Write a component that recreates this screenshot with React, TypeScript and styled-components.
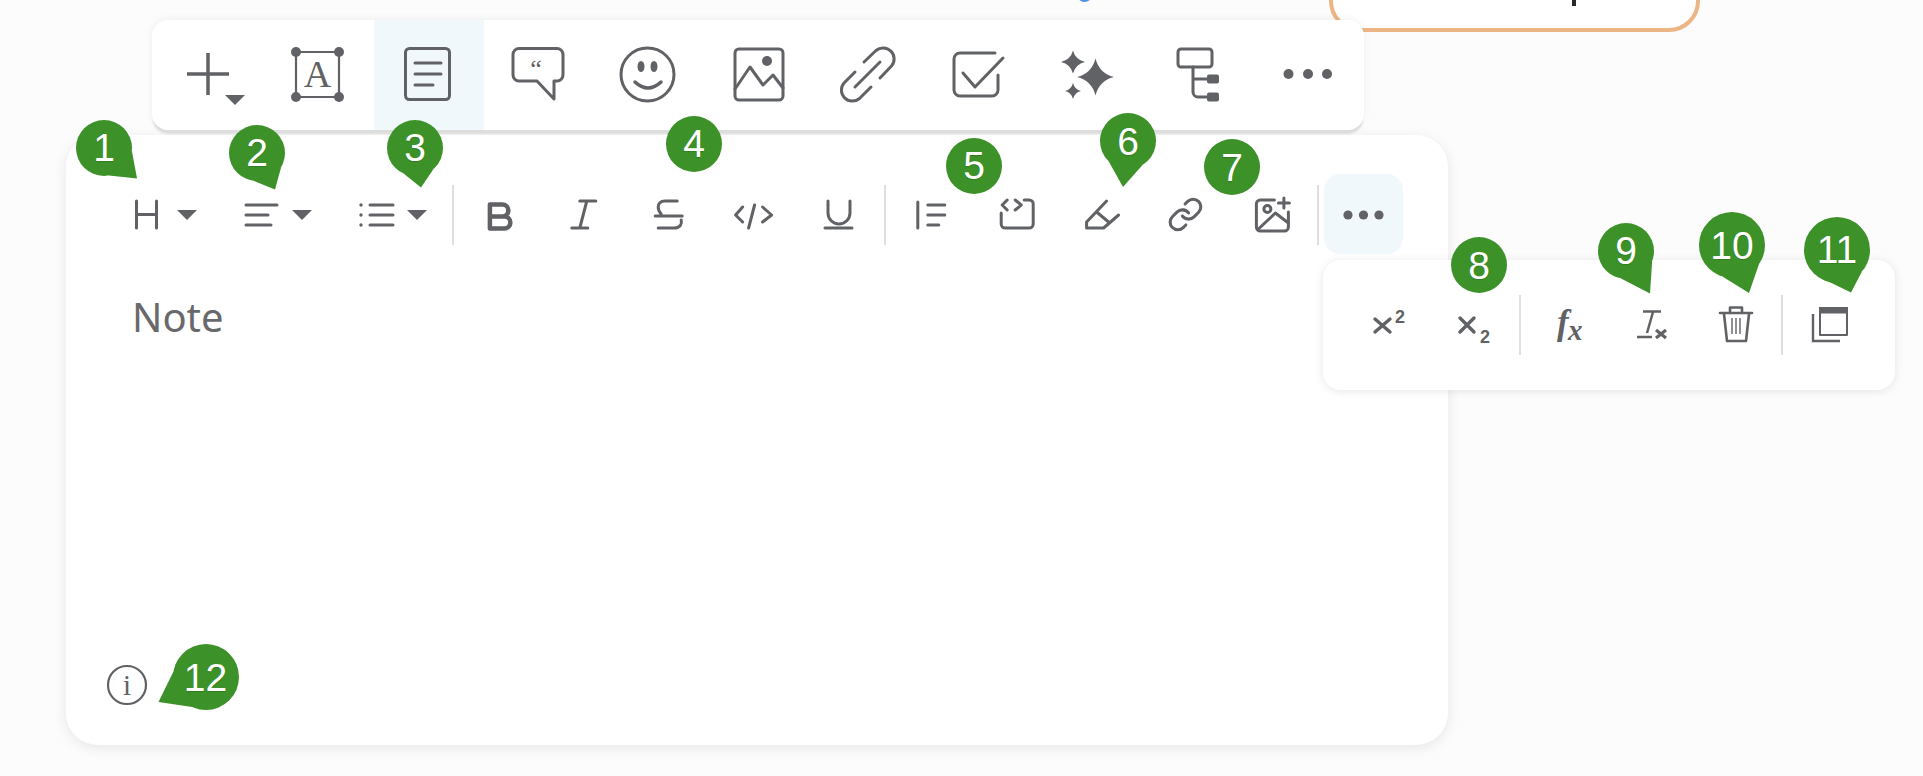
import React from "react";
import styled, { createGlobalStyle } from "styled-components";

const INK = "#606265";

const Global = createGlobalStyle`
  html, body { margin: 0; padding: 0; background: #fcfcfc; }
  body { width: 1923px; height: 776px; overflow: hidden; font-family: "Noto Sans", "Liberation Sans", sans-serif; }
`;

const Page = styled.div`
  position: relative;
  width: 1923px;
  height: 776px;
  padding: 20px 0 0 66px;
  box-sizing: border-box;
  overflow: hidden;
`;

const BlueDot = styled.div`
  position: absolute;
  left: 1077px;
  top: -13px;
  width: 15px;
  height: 15px;
  border-radius: 50%;
  background: #4a8fe8;
`;

const OrangeBox = styled.div`
  position: absolute;
  left: 1329px;
  top: -30px;
  width: 371px;
  height: 62px;
  box-sizing: border-box;
  border: 4px solid #ecb584;
  border-radius: 32px;
  background: #fff;
  &::after {
    content: "";
    position: absolute;
    left: 239px;
    top: 26px;
    width: 4px;
    height: 6px;
    background: #2a2a2a;
  }
`;

const TopBar = styled.div`
  position: relative;
  z-index: 2;
  display: flex;
  width: 1212px;
  height: 110px;
  margin-left: 86px;
  padding-left: 2px;
  box-sizing: border-box;
  background: #fff;
  border-radius: 16px;
  box-shadow: 0 5px 2px -1px #dddddd, 0 -1px 8px rgba(0, 0, 0, 0.06);
`;

const TopButton = styled.div<{ $active?: boolean }>`
  flex: 0 0 110px;
  height: 110px;
  background: ${(p) => (p.$active ? "#f0f8fc" : "transparent")};
`;

const Card = styled.div`
  position: relative;
  display: flex;
  flex-direction: column;
  width: 1382px;
  height: 610px;
  margin-top: 5px;
  padding: 39px 0 40px 44px;
  box-sizing: border-box;
  background: #fff;
  border-radius: 32px;
  box-shadow: 0 3px 14px rgba(0, 0, 0, 0.09);
`;

const EditorBar = styled.div`
  display: flex;
  align-items: center;
  height: 80px;
`;

const MenuButton = styled.div`
  flex: 0 0 113px;
  height: 80px;
`;

const ToolButton = styled.div`
  flex: 0 0 84.6px;
  height: 80px;
`;

const MoreButton = styled.div`
  flex: 0 0 79px;
  height: 80px;
  border-radius: 16px;
  background: #f1f8fc;
`;

const Divider = styled.div<{ $gap: number; $top: number }>`
  flex: 0 0 2px;
  height: 60px;
  margin: ${(p) => p.$top}px ${(p) => p.$gap}px 0;
  background: #dedfe0;
`;

const NoteText = styled.div`
  margin: 38px 0 0 22px;
  font-size: 40px;
  line-height: 50px;
  color: #68696b;
  flex: 1;
`;

const InfoRow = styled.div`
  margin-left: -3px;
  height: 40px;
`;

const Popover = styled.div`
  position: absolute;
  left: 1257px;
  top: 125px;
  display: flex;
  align-items: flex-start;
  width: 572px;
  height: 130px;
  padding: 35px 0 0 24px;
  box-sizing: border-box;
  background: #fff;
  border-radius: 18px;
  box-shadow: 0 1px 10px rgba(0, 0, 0, 0.1);
`;

const PopButton = styled.div`
  flex: 0 0 85px;
  height: 60px;
`;

const Glyph = styled.svg`
  display: block;
  overflow: visible;
  fill: none;
  stroke: ${INK};
  stroke-width: 3;
  stroke-linecap: round;
  stroke-linejoin: round;
`;

const GlyphText = styled.text<{ $font: string; $size: number; $weight?: number; $italic?: boolean }>`
  font-family: ${(p) => p.$font};
  font-size: ${(p) => p.$size}px;
  font-weight: ${(p) => p.$weight ?? 400};
  font-style: ${(p) => (p.$italic ? "italic" : "normal")};
  fill: ${INK};
  stroke: none;
`;

const SERIF = `"Liberation Serif", serif`;
const SANS = `"Liberation Sans", sans-serif`;

type SlotProps = { x: number; y: number; w: number; h: number; children: React.ReactNode };
const Slot = ({ x, y, w, h, children }: SlotProps) => (
  <Glyph width={w} height={h} viewBox={`${x} ${y} ${w} ${h}`}>
    {children}
  </Glyph>
);

const Caret = ({ x, y, w = 20, h = 10 }: { x: number; y: number; w?: number; h?: number }) => (
  <polygon points={`${x},${y} ${x + w},${y} ${x + w / 2},${y + h}`} fill={INK} stroke="none" />
);

const Star = ({ cx, cy, w, h }: { cx: number; cy: number; w: number; h: number }) => {
  const a = w * 0.2;
  const b = h * 0.2;
  return (
    <path
      d={`M${cx} ${cy - h}Q${cx + a} ${cy - b} ${cx + w} ${cy}Q${cx + a} ${cy + b} ${cx} ${cy + h}Q${cx - a} ${cy + b} ${cx - w} ${cy}Q${cx - a} ${cy - b} ${cx} ${cy - h}Z`}
      fill={INK}
      stroke="none"
    />
  );
};

const Dots = ({ xs, y, r }: { xs: number[]; y: number; r: number }) => (
  <>
    {xs.map((x) => (
      <circle key={x} cx={x} cy={y} r={r} fill={INK} stroke="none" />
    ))}
  </>
);

const topIcons: React.ReactNode[] = [
  <>
    <path d="M187 74H229M208 53V95" strokeWidth={3.5} strokeLinecap="butt" />
    <Caret x={225} y={95} />
  </>,
  <>
    <rect x={296} y={52} width={43} height={45} strokeWidth={2.2} />
    <circle cx={296} cy={52} r={5} fill={INK} stroke="none" />
    <circle cx={339} cy={52} r={5} fill={INK} stroke="none" />
    <circle cx={296} cy={97} r={5} fill={INK} stroke="none" />
    <circle cx={339} cy={97} r={5} fill={INK} stroke="none" />
    <GlyphText x={317.5} y={87} textAnchor="middle" $font={SERIF} $size={38}>A</GlyphText>
  </>,
  <>
    <rect x={405.5} y={48.5} width={44} height={51} rx={4} />
    <path d="M415 63H441M415 74H441M415 85H433" />
  </>,
  <>
    <path d="M519 48.5H557a6 6 0 0 1 6 6V75a6 6 0 0 1-6 6H554V99L537 81H519a6 6 0 0 1-6-6V54.5a6 6 0 0 1 6-6Z" />
    <GlyphText x={536} y={77} textAnchor="middle" $font={SERIF} $size={26}>“</GlyphText>
  </>,
  <>
    <circle cx={647.5} cy={74.5} r={26.5} />
    <ellipse cx={641} cy={66.5} rx={3.5} ry={5.5} fill={INK} stroke="none" />
    <ellipse cx={654} cy={66.5} rx={3.5} ry={5.5} fill={INK} stroke="none" />
    <path d="M635 82Q648 94 661 82" strokeWidth={3.5} />
  </>,
  <>
    <rect x={735} y={49} width={48} height={51} rx={4} />
    <circle cx={767} cy={61} r={5} fill={INK} stroke="none" />
    <path d="M735 89L750 67L763 85L773 75L783 88" />
  </>,
  <>
    <path d="M864 62L876 50.5a11 11 0 0 1 15.5 15.5L880 78" />
    <path d="M855 72L844 83a11 11 0 0 0 15.5 15.5L871 87" />
    <path d="M855 87L880 62" />
  </>,
  <>
    <path d="M995 53H960a6 6 0 0 0-6 6V90a6 6 0 0 0 6 6H992a6 6 0 0 0 6-6V75" />
    <path d="M963 73L975 87L1003 58" />
  </>,
  <>
    <Star cx={1095.5} cy={77} w={18.5} h={18.5} />
    <Star cx={1073} cy={62} w={12} h={11.5} />
    <Star cx={1073} cy={91} w={8} h={8} />
  </>,
  <>
    <rect x={1178} y={49} width={34} height={18} rx={3} />
    <path d="M1193 67V92a5 5 0 0 0 5 5H1208M1193 79H1208" />
    <rect x={1207} y={74.5} width={12} height={9} rx={2} fill={INK} stroke="none" />
    <rect x={1207} y={92.5} width={12} height={9} rx={2} fill={INK} stroke="none" />
  </>,
  <Dots xs={[1288.5, 1308, 1327]} y={74} r={5} />,
];

const menuIcons: React.ReactNode[] = [
  <>
    <path d="M136.5 201V228M156.5 201V228M136.5 214.5H156.5" />
    <Caret x={177} y={210} />
  </>,
  <>
    <path d="M246 205H277M246 215H268M246 225H271" />
    <Caret x={292} y={210} />
  </>,
  <>
    <path d="M370 205H393M370 215H393M370 225H393" />
    <Dots xs={[361]} y={205} r={1.7} />
    <Dots xs={[361]} y={215} r={1.7} />
    <Dots xs={[361]} y={225} r={1.7} />
    <Caret x={407} y={210} />
  </>,
];

const firstTools: React.ReactNode[] = [
  <path d="M489.5 204.5H502a6 6 0 0 1 0 12H489.5M489.5 216.5H504a6 6 0 0 1 0 12H489.5V204.5Z" strokeWidth={4.5} />,
  <path d="M580 201H596M572 228H588M587 201L580 228" />,
  <path d="M677 201H665C660 201 658 204 658 207C658 210 659 212 661 214M655 216H682M681 220C682 224 680 228 674 228H658" />,
  <path d="M743 207L736 215L743 222M755 205L749 228M763 207L772 215L763 222" />,
  <path d="M828 201V213a11 11 0 0 0 22 0V201M825 228H852" />,
];

const secondTools: React.ReactNode[] = [
  <path d="M918 202V228M928 205H945M928 215H945M928 225H939" />,
  <path d="M1024 200H1029a4 4 0 0 1 4 4V224a4 4 0 0 1-4 4H1005a4 4 0 0 1-4-4V213M1007 200L1002 205L1007 210M1015 200L1021 205L1015 210" />,
  <path d="M1107 201L1087 222V228H1104L1119 215M1097 212L1109 222" />,
  <g transform="translate(1167 196) scale(1.54)" strokeWidth={2}>
    <path d="M10 13a5 5 0 0 0 7.54.54l3-3a5 5 0 0 0-7.07-7.07l-1.72 1.71" />
    <path d="M14 11a5 5 0 0 0-7.54-.54l-3 3a5 5 0 0 0 7.07 7.07l1.71-1.71" />
  </g>,
  <>
    <path d="M1274 200H1260a4 4 0 0 0-4 4V227a4 4 0 0 0 4 4H1284a4 4 0 0 0 4-4V212" />
    <circle cx={1267} cy={209} r={3.5} />
    <path d="M1258 229L1275 213L1288 223M1278 203H1289M1283.5 198V208" />
  </>,
];

const popIcons: { x: number; icon: React.ReactNode }[] = [
  {
    x: 1347,
    icon: (
      <>
        <path d="M1375 319L1390 332M1390 319L1375 332" strokeWidth={3.4} />
        <GlyphText x={1395} y={323} $font={SANS} $size={18} $weight={700}>2</GlyphText>
      </>
    ),
  },
  {
    x: 1432,
    icon: (
      <>
        <path d="M1460 318L1474 332M1474 318L1460 332" strokeWidth={3.4} />
        <GlyphText x={1480} y={343} $font={SANS} $size={18} $weight={700}>2</GlyphText>
      </>
    ),
  },
  {
    x: 1523,
    icon: (
      <>
        <GlyphText x={1557} y={334} $font={SERIF} $size={35} $weight={700} $italic>f</GlyphText>
        <GlyphText x={1568} y={340} $font={SERIF} $size={29} $weight={700} $italic>x</GlyphText>
      </>
    ),
  },
  {
    x: 1608,
    icon: (
      <>
        <path d="M1643 311.5H1661M1653 312L1647 333M1637 337H1652" strokeWidth={2.5} strokeLinecap="butt" />
        <path d="M1656 330L1666 338M1666 330L1656 338" strokeWidth={3.2} strokeLinecap="butt" />
      </>
    ),
  },
  {
    x: 1693,
    icon: (
      <>
        <path d="M1720 313H1752M1730 312V307.5H1742V312M1724 314L1727 341H1746L1749 314" strokeWidth={2.6} />
        <path d="M1732 318V334M1736 318V334M1740 318V334" strokeWidth={1.4} strokeLinecap="butt" />
      </>
    ),
  },
  {
    x: 1786,
    icon: (
      <>
        <rect x={1820} y={308} width={27} height={27} strokeWidth={2} strokeLinecap="butt" />
        <rect x={1819} y={307} width={29} height={6.5} fill={INK} stroke="none" />
        <path d="M1813 314V341H1840" strokeWidth={2.4} strokeLinecap="butt" strokeLinejoin="miter" />
      </>
    ),
  },
];

const PinBody = styled.div<{ $cx: number; $cy: number; $r: number }>`
  position: absolute;
  z-index: 5;
  left: ${(p) => p.$cx - p.$r}px;
  top: ${(p) => p.$cy - p.$r}px;
  width: ${(p) => p.$r * 2}px;
  height: ${(p) => p.$r * 2}px;
  display: flex;
  align-items: center;
  justify-content: center;
  font-family: "Liberation Sans", Arial, sans-serif;
  font-size: 39px;
  line-height: 1;
  color: #fff;
  text-shadow: 0 1px 1px rgba(0, 0, 0, 0.15);
`;

const PinShape = styled.svg`
  position: absolute;
  inset: 0;
  overflow: visible;
  fill: #3c9128;
`;

const PinNumber = styled.span`
  position: relative;
`;

type PinData = { n: number; cx: number; cy: number; r?: number; tip?: [number, number] };

const Pin = ({ n, cx, cy, r = 28, tip }: PinData) => {
  let points = "";
  if (tip) {
    const dx = tip[0] - cx;
    const dy = tip[1] - cy;
    const d = Math.hypot(dx, dy);
    const base = Math.atan2(dy, dx);
    const spread = Math.acos(r / d) * 0.72;
    const a = [r + r * Math.cos(base + spread), r + r * Math.sin(base + spread)];
    const b = [r + r * Math.cos(base - spread), r + r * Math.sin(base - spread)];
    points = `${a[0]},${a[1]} ${dx + r},${dy + r} ${b[0]},${b[1]}`;
  }
  return (
    <PinBody $cx={cx} $cy={cy} $r={r}>
      <PinShape width={r * 2} height={r * 2}>
        <circle cx={r} cy={r} r={r} />
        {tip && <polygon points={points} />}
      </PinShape>
      <PinNumber>{n}</PinNumber>
    </PinBody>
  );
};

const pins: PinData[] = [
  { n: 1, cx: 104, cy: 147.5, tip: [137, 178] },
  { n: 2, cx: 257, cy: 152.5, tip: [275, 189] },
  { n: 3, cx: 415, cy: 147.5, tip: [421, 187] },
  { n: 4, cx: 694, cy: 143.5 },
  { n: 5, cx: 974, cy: 165.5 },
  { n: 6, cx: 1128, cy: 141, tip: [1123, 187] },
  { n: 7, cx: 1232, cy: 167 },
  { n: 8, cx: 1479, cy: 265 },
  { n: 9, cx: 1626, cy: 250.5, tip: [1650, 293] },
  { n: 10, cx: 1732, cy: 245, r: 33, tip: [1749, 293] },
  { n: 11, cx: 1837, cy: 249.5, r: 33, tip: [1851, 292] },
  { n: 12, cx: 205.5, cy: 677, r: 33, tip: [158, 702] },
];

export default function App() {
  return (
    <Page>
      <Global />
      <BlueDot />
      <OrangeBox />
      <TopBar>
        {topIcons.map((icon, i) => (
          <TopButton key={i} $active={i === 2}>
            <Slot x={154 + 110 * i} y={20} w={110} h={110}>{icon}</Slot>
          </TopButton>
        ))}
      </TopBar>
      <Card>
        <EditorBar>
          {menuIcons.map((icon, i) => (
            <MenuButton key={i}>
              <Slot x={110 + 113 * i} y={174} w={113} h={80}>{icon}</Slot>
            </MenuButton>
          ))}
          <Divider $gap={3.3} $top={2} />
          {firstTools.map((icon, i) => (
            <ToolButton key={i}>
              <Slot x={457.6 + 84.6 * i} y={174} w={84.6} h={80}>{icon}</Slot>
            </ToolButton>
          ))}
          <Divider $gap={3.3} $top={2} />
          {secondTools.map((icon, i) => (
            <ToolButton key={i}>
              <Slot x={889.2 + 84.6 * i} y={174} w={84.6} h={80}>{icon}</Slot>
            </ToolButton>
          ))}
          <Divider $gap={5} $top={2} />
          <MoreButton>
            <Slot x={1324} y={174} w={79} h={80}>
              <Dots xs={[1348, 1363.5, 1379]} y={215} r={4.6} />
            </Slot>
          </MoreButton>
        </EditorBar>
        <NoteText>Note</NoteText>
        <InfoRow>
          <Slot x={107} y={665} w={40} h={40}>
            <circle cx={127} cy={685} r={19} strokeWidth={2.2} />
            <GlyphText x={127} y={695} textAnchor="middle" $font={SERIF} $size={29}>i</GlyphText>
          </Slot>
        </InfoRow>
        <Popover>
          {popIcons.slice(0, 2).map((p) => (
            <PopButton key={p.x}><Slot x={p.x} y={295} w={85} h={60}>{p.icon}</Slot></PopButton>
          ))}
          <Divider $gap={2} $top={0} />
          {popIcons.slice(2, 5).map((p) => (
            <PopButton key={p.x}><Slot x={p.x} y={295} w={85} h={60}>{p.icon}</Slot></PopButton>
          ))}
          <Divider $gap={3} $top={0} />
          {popIcons.slice(5).map((p) => (
            <PopButton key={p.x}><Slot x={p.x} y={295} w={85} h={60}>{p.icon}</Slot></PopButton>
          ))}
        </Popover>
      </Card>
      {pins.map((p) => (
        <Pin key={p.n} {...p} />
      ))}
    </Page>
  );
}
